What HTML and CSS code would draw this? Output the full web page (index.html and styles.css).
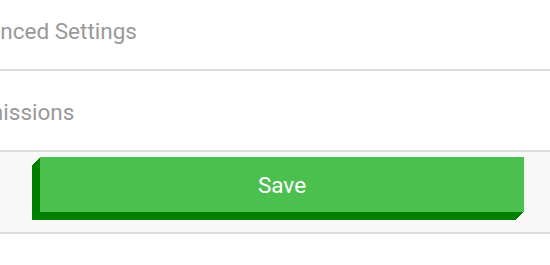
FILE: index.html
```html
<!DOCTYPE html>
<html>
<head>
<meta charset="utf-8">
<link rel="stylesheet" href="styles.css">
</head>
<body>
<div class="page">
  <div class="row"><span class="label">Advanced Settings</span></div>
  <div class="row"><span class="label">Permissions</span></div>
  <div class="save-bar">
    <button class="save-btn">Save</button>
  </div>
</div>
</body>
</html>
```
FILE: styles.css
```css
html, body {
  margin: 0;
  padding: 0;
  background: #ffffff;
  overflow: hidden;
}
.page {
  width: 550px;
  margin-top: -10px;
  font-family: Roboto, "Liberation Sans", sans-serif;
}
.row {
  height: 79px;
  border-bottom: 2px solid #dddddd;
  display: flex;
  align-items: center;
}
.label {
  margin-left: -50px;
  padding-top: 2px;
  font-size: 22.5px;
  color: #999999;
  white-space: nowrap;
}
.save-bar {
  background: #f8f8f8;
  border-bottom: 2px solid #dddddd;
  padding: 5px 26px 20px 40px;
}
.save-btn {
  display: block;
  width: 484px;
  height: 55px;
  border: none;
  margin: 0;
  padding: 0;
  background: #4cc04f;
  color: #ffffff;
  font-family: Roboto, "Liberation Sans", sans-serif;
  font-size: 22.5px;
  box-shadow: -1px 1px 0 #008000, -2px 2px 0 #008000, -3px 3px 0 #008000, -4px 4px 0 #008000,
    -5px 5px 0 #008000, -6px 6px 0 #008000, -7px 7px 0 #008000, -8px 8px 0 #008000;
}
```
